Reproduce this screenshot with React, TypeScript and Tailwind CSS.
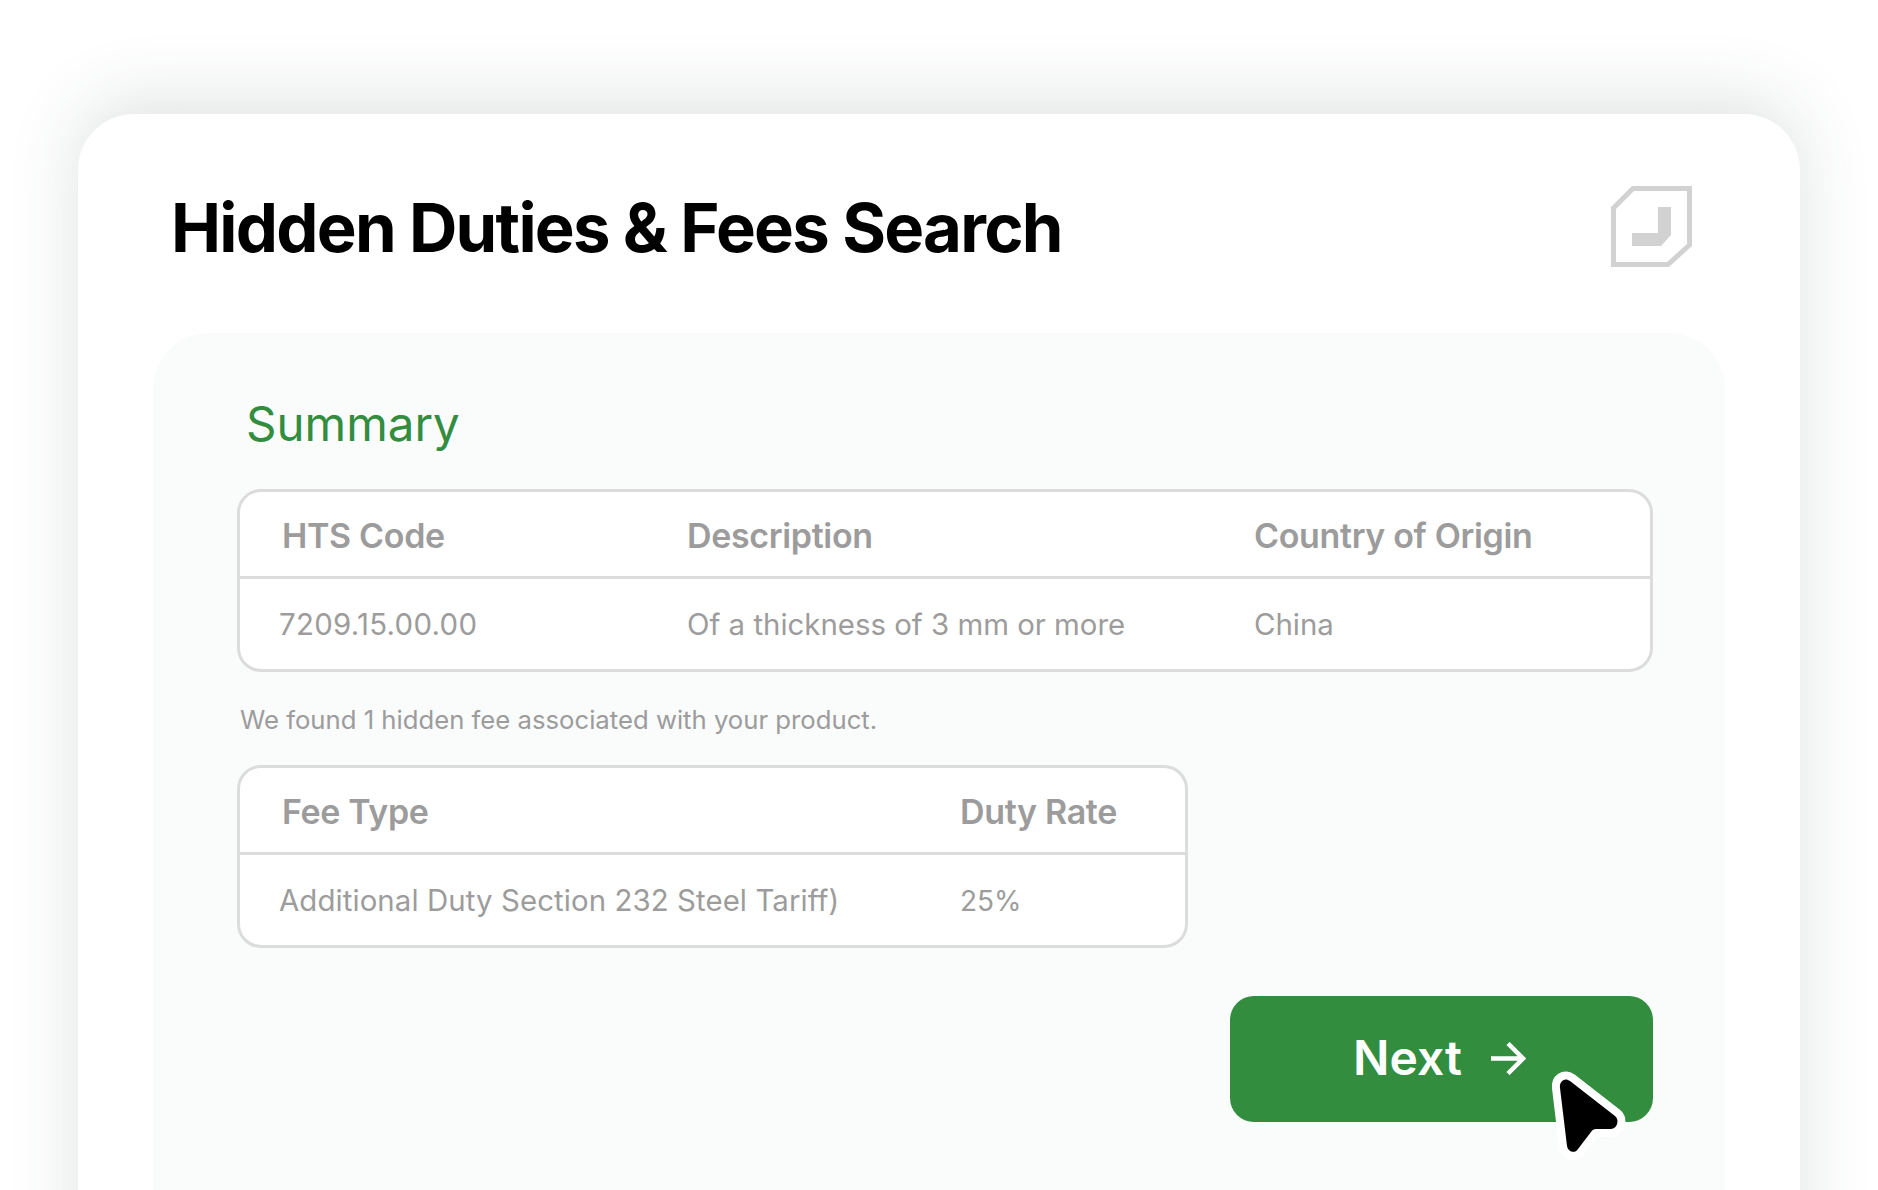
import React from 'react';

const Logo = () => (
  <svg width="81" height="81" viewBox="0 0 81 81" fill="none">
    <path d="M2.5 22L22 2.5H78.5V59L57 78.5H2.5Z" stroke="#d2d2d2" strokeWidth="5" />
    <path d="M47 21H60V49L50 60H21V47H47Z" fill="#d2d2d2" />
  </svg>
);

const Cursor = () => (
  <svg width="82" height="92" viewBox="0 0 82 92" fill="none" className="overflow-visible">
    <path
      d="M11 17C10 10 16 6 21 10L66 45C71 49 68 58 62 58H47C45 58 43 59 42 61L29 78C26 83 19 81 18 75Z"
      fill="#000"
      stroke="#fff"
      strokeWidth="16"
      strokeLinejoin="round"
      paintOrder="stroke"
    />
  </svg>
);

const App: React.FC = () => {
  return (
    <div className="h-[1190px] w-[1878px] overflow-hidden bg-white font-['Inter',sans-serif]">
      <div className="pt-[114px] pl-[78px]">
        <div className="relative w-[1722px] h-[1200px] rounded-t-[56px] bg-white shadow-[0_-14px_70px_rgba(50,65,65,0.15)] px-[75px]">
          <div className="flex items-start justify-between pt-[72px] pr-[33px] h-[219px]">
            <h1 className="mt-[1px] pl-[18px] text-[67px] leading-[82px] font-bold tracking-[-0.026em] text-black">
              Hidden Duties &amp; Fees Search
            </h1>
            <Logo />
          </div>

          <div className="rounded-t-[56px] bg-[#fafbfb] h-[900px] pt-[61px] pl-[84px] pr-[72px]">
            <h2 className="pl-[9px] text-[47.5px] leading-[60px] text-[#328d3e] font-normal">Summary</h2>

            <div className="mt-[35px] h-[183px] rounded-[24px] border-[3px] border-[#dcdcdc] bg-white">
              <div className="flex h-[87px] items-center border-b-[3px] border-[#dcdcdc] pt-[3px] text-[34px] font-semibold text-[#9c9c9c] tracking-[-0.01em]">
                <div className="w-[447px] pl-[42px]">HTS Code</div>
                <div className="w-[567px]">Description</div>
                <div>Country of Origin</div>
              </div>
              <div className="flex h-[90px] items-center pt-[2px] text-[29.4px] text-[#9c9c9c]">
                <div className="w-[447px] pl-[39px] tracking-[0.01em]">7209.15.00.00</div>
                <div className="w-[567px]">Of a thickness of 3 mm or more</div>
                <div>China</div>
              </div>
            </div>

            <p className="mt-[31px] pl-[3px] text-[25.7px] leading-[34px] text-[#9c9c9c]">
              We found 1 hidden fee associated with your product.
            </p>

            <div className="mt-[28px] h-[183px] w-[951px] rounded-[24px] border-[3px] border-[#dcdcdc] bg-white">
              <div className="flex h-[87px] items-center border-b-[3px] border-[#dcdcdc] pt-[3px] text-[34px] font-semibold text-[#9c9c9c] tracking-[-0.01em]">
                <div className="w-[720px] pl-[42px]">Fee Type</div>
                <div>Duty Rate</div>
              </div>
              <div className="flex h-[90px] items-center pt-[2px] text-[29.4px] text-[#9c9c9c]">
                <div className="w-[720px] pl-[39px] tracking-[0.003em]">Additional Duty Section 232 Steel Tariff)</div>
                <div className="text-[28px]">25%</div>
              </div>
            </div>

            <div className="mt-[48px] flex justify-end">
              <button className="relative flex h-[126px] w-[423px] items-center justify-center gap-[28px] rounded-[24px] bg-[#328d3e] pr-[4px] pb-[2px] text-[48px] font-semibold text-white">
                <span>Next</span>
                <svg width="36" height="33" viewBox="0 0 36 33" fill="none" stroke="#fff" strokeWidth="4.5">
                  <path d="M1 16.5H33M18 1.5L33 16.5L18 31.5" />
                </svg>
                <div className="absolute left-[319px] top-[75px]"><Cursor /></div>
              </button>
            </div>
          </div>
        </div>
      </div>
    </div>
  );
};

export default App;
